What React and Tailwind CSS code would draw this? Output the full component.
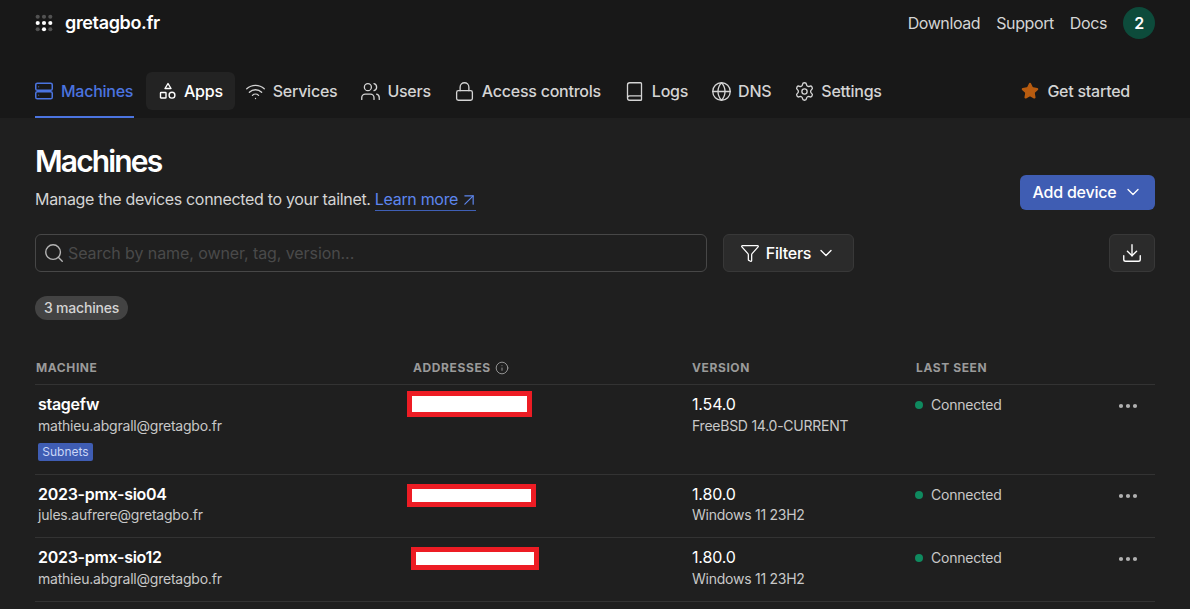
import {
  Wifi,
  Users,
  Lock,
  Book,
  Globe,
  Settings,
  Star,
  Search,
  Filter,
  ChevronDown,
  Download,
  Info,
  Ellipsis,
  ArrowUpRight,
} from "lucide-react";

function ServerIcon({ className }) {
  return (
    <svg viewBox="0 0 18 18" fill="none" stroke="currentColor" strokeWidth="1.5" className={className}>
      <rect x="0.75" y="1.25" width="16.5" height="7" rx="1.6" />
      <rect x="0.75" y="9.75" width="16.5" height="7" rx="1.6" />
      <path d="M3.5 4.75h.6M3.5 13.25h.6" />
    </svg>
  );
}

function AppsIcon({ className }) {
  return (
    <svg viewBox="0 0 18 18" fill="none" stroke="currentColor" strokeWidth="1.4" className={className}>
      <path d="M9 1.5l3 5H6z" strokeLinejoin="round" />
      <rect x="1.5" y="10.5" width="5.5" height="5.5" rx="0.6" />
      <circle cx="13" cy="13.2" r="2.9" />
    </svg>
  );
}

function Logo() {
  const dots = [
    [3, 3, 0.25], [10, 3, 0.25], [17, 3, 0.25],
    [3, 10, 1], [10, 10, 1], [17, 10, 1],
    [3, 17, 0.25], [10, 17, 1], [17, 17, 0.25],
  ];
  return (
    <svg viewBox="0 0 20 20" className="w-[18px] h-[18px]">
      {dots.map(([x, y, o], i) => (
        <circle key={i} cx={x} cy={y} r="2.3" fill="#fff" opacity={o} />
      ))}
    </svg>
  );
}

const navItems = [
  { label: "Services", Icon: Wifi, extra: "" },
  { label: "Users", Icon: Users, extra: "" },
  { label: "Access controls", Icon: Lock, extra: "ml-[1px]" },
  { label: "Logs", Icon: Book, extra: "ml-[1px]" },
  { label: "DNS", Icon: Globe, extra: "" },
  { label: "Settings", Icon: Settings, extra: "" },
];

const machines = [
  {
    name: "stagefw",
    owner: "mathieu.abgrall@gretagbo.fr",
    badge: "Subnets",
    version: "1.54.0",
    os: "FreeBSD 14.0-CURRENT",
    rowPad: "pb-[13px]",
    subLine: "",
    addrBox: "ml-[-8px] w-[125px] h-[26px] mt-[-1px]",
  },
  {
    name: "2023-pmx-sio04",
    owner: "jules.aufrere@gretagbo.fr",
    version: "1.80.0",
    os: "Windows 11 23H2",
    rowPad: "pb-[12px]",
    subLine: "mt-[-1px]",
    addrBox: "ml-[-8px] w-[129px] h-[23px] mt-[2px]",
  },
  {
    name: "2023-pmx-sio12",
    owner: "mathieu.abgrall@gretagbo.fr",
    version: "1.80.0",
    os: "Windows 11 23H2",
    rowPad: "pb-[12px]",
    subLine: "",
    addrBox: "ml-[-4px] w-[128px] h-[23px] mt-[2px]",
  },
];

const gridCols = "grid grid-cols-[377px_279px_224px_1fr]";

export default function App() {
  return (
    <div className="h-[609px] overflow-hidden bg-[#1f1f1f] text-[#e6e6e6] font-['Inter',sans-serif]">
      {/* Header */}
      <div className="h-[118px] bg-[#181818]">
        <div className="flex items-center justify-between px-[35px] pt-[3px] h-[39px] box-content">
          <div className="flex items-center gap-[12px]">
            <Logo />
            <span className="text-[18px] font-semibold tracking-[-0.35px] text-white">gretagbo.fr</span>
          </div>
          <div className="flex items-center gap-[16px] text-[16px] tracking-[-0.4px] text-[#d4d4d4]">
            <span>Download</span>
            <span>Support</span>
            <span>Docs</span>
            <div className="w-[32px] h-[32px] rounded-full bg-[#0d4b3b] text-white text-[16px] font-semibold flex items-center justify-center">
              2
            </div>
          </div>
        </div>
        <div className="flex items-start pl-[23px] pr-[48px] mt-[30px] text-[16px] font-medium tracking-[-0.25px] text-[#d4d4d4]">
          <div className="px-[12px]">
            <div className="h-[46px] pb-[6px] flex items-center gap-[8px] text-[#4b74e0] border-b-2 border-[#4b74e0] w-[99px]">
              <ServerIcon className="w-[18px] h-[18px] shrink-0" />
              <span>Machines</span>
            </div>
          </div>
          <div className="h-[38px] flex items-center gap-[7px] pl-[13px] pr-[12px] rounded-md bg-[#232323] text-white">
            <AppsIcon className="w-[18px] h-[18px] shrink-0" />
            <span>Apps</span>
          </div>
          {navItems.map(({ label, Icon, extra }) => (
            <div key={label} className={`${extra} h-[38px] flex items-center gap-[8px] px-[12px]`}>
              <Icon className="w-[21px] h-[21px] mx-[-1.5px] shrink-0" strokeWidth={1.5} />
              <span>{label}</span>
            </div>
          ))}
          <div className="h-[38px] ml-auto flex items-center gap-[8px] px-[12px]">
            <Star className="w-[18px] h-[18px] text-[#b85c10]" fill="#b85c10" />
            <span>Get started</span>
          </div>
        </div>
      </div>

      {/* Page content */}
      <div className="px-[35px]">
        <div className="flex items-start justify-between pt-[25px]">
          <div>
            <h1 className="text-[30px] leading-[36px] font-semibold text-white tracking-[-1.85px]">Machines</h1>
            <p className="mt-[8px] text-[16px] leading-[24px] tracking-[-0.32px] text-[#d4d4d4]">
              Manage the devices connected to your tailnet.{" "}
              <span className="text-[#5d86ee] border-b border-[#3f5fb5] inline-flex items-center gap-[4px] leading-[21px]">
                Learn more <ArrowUpRight className="w-[20px] h-[20px] mx-[-3px]" strokeWidth={1.4} />
              </span>
            </p>
          </div>
          <button className="mt-[32px] h-[35px] w-[135px] pb-[2px] rounded-md bg-[#3f5db3] text-white text-[16px] font-medium tracking-[-0.2px] flex items-center justify-center gap-[6px]">
            Add device
            <ChevronDown className="w-[20px] h-[20px]" strokeWidth={1.6} />
          </button>
        </div>

        <div className="flex mt-[23px] gap-[16px]">
          <div className="w-[672px] h-[38px] rounded-md border border-[#474747] flex items-center pl-[8px] gap-[5px]">
            <Search className="w-[22px] h-[22px] mx-[-1.5px] text-[#b5b5b5]" strokeWidth={1.5} />
            <span className="text-[16px] tracking-[-0.08px] text-[#4a4a4a]">Search by name, owner, tag, version...</span>
          </div>
          <button className="w-[131px] h-[38px] rounded-md border border-[#383838] bg-[#2b2b2b] flex items-center justify-center gap-[7px] pr-[2px] text-[16px] font-medium tracking-[-0.25px] text-white">
            <Filter className="w-[20px] h-[20px] mx-[-1px]" strokeWidth={1.5} />
            Filters
            <ChevronDown className="w-[20px] h-[20px] mx-[-2px]" strokeWidth={1.6} />
          </button>
          <button className="ml-auto w-[46px] h-[38px] rounded-md border border-[#383838] bg-[#2b2b2b] flex items-center justify-center text-white">
            <Download className="w-[22px] h-[22px]" strokeWidth={1.5} />
          </button>
        </div>

        <div className="mt-[24px] w-[93px] h-[24px] pb-[2px] rounded-full bg-[#434343] text-[14px] font-medium tracking-[-0.2px] text-[#d4d4d4] flex items-center justify-center">
          3 machines
        </div>

        {/* Table */}
        <div className="mt-[34px]">
          <div className={`${gridCols} h-[31px] items-start pt-[6px] pl-px border-b border-[#333333] text-[12px] leading-[16px] font-bold tracking-[0.6px] text-[#9a9a9a]`}>
            <span>MACHINE</span>
            <span className="flex items-center gap-[4px]">
              ADDRESSES <Info className="w-[14px] h-[14px]" strokeWidth={1.6} />
            </span>
            <span>VERSION</span>
            <span>LAST SEEN</span>
          </div>
          {machines.map((m) => (
            <div key={m.name} className={`${gridCols} pl-[3px] pt-[7px] ${m.rowPad} border-b border-[#333333]`}>
              <div className="min-w-0">
                <div className="text-[16px] leading-[24px] font-semibold tracking-[-0.28px] text-white">{m.name}</div>
                <div className={`${m.subLine} text-[14px] leading-[20px] tracking-[-0.22px] text-[#c8c8c8]`}>{m.owner}</div>
                {m.badge && (
                  <div className="mt-[7px] w-[55px] h-[18px] rounded-[2px] bg-[#3f5db3] text-[12px] text-[#c9d6f7] flex items-center justify-center">
                    {m.badge}
                  </div>
                )}
              </div>
              <div>
                <div className={`${m.addrBox} bg-white border-[5px] border-[#ed1c24]`} />
              </div>
              <div className="ml-[-2px]">
                <div className="text-[16px] leading-[24px] tracking-[-0.15px] text-white">{m.version}</div>
                <div className={`${m.subLine} text-[14px] leading-[20px] tracking-[-0.25px] text-[#c8c8c8]`}>{m.os}</div>
              </div>
              <div className="flex items-start justify-between pr-[17px] ml-[-3px]">
                <div className="flex items-center gap-[8px] mt-[1px] text-[14px] leading-[24px] tracking-[-0.22px] text-[#c8c8c8]">
                  <span className="w-[8px] h-[8px] rounded-full bg-[#0f8a5f]" />
                  Connected
                </div>
                <Ellipsis className="w-[28px] h-[24px] mx-[-4px] mt-[2px] text-[#b0b0b0]" strokeWidth={2.2} />
              </div>
            </div>
          ))}
        </div>
      </div>
    </div>
  );
}
